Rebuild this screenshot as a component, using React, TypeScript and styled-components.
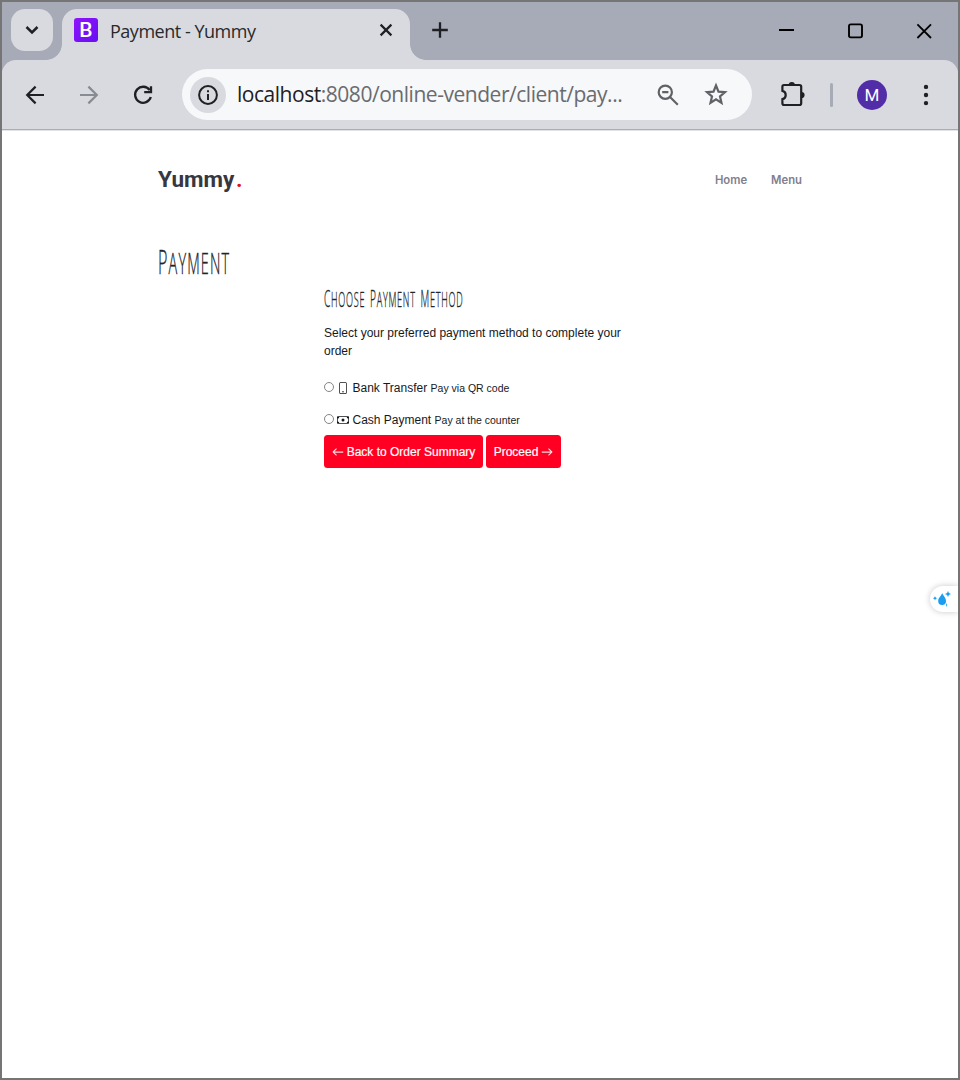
import React from "react";
import styled, { createGlobalStyle } from "styled-components";
import { BsPhone, BsCash, BsArrowLeft, BsArrowRight } from "react-icons/bs";

const GlobalStyle = createGlobalStyle`
  * { box-sizing: border-box; }
  body { margin: 0; background: #fff; }
`;

const Window = styled.div`
  width: 960px;
  height: 1080px;
  border: 2px solid #757575;
  background: #fff;
  display: flex;
  flex-direction: column;
  position: relative;
  overflow: hidden;
  font-family: "Liberation Sans", Arial, sans-serif;
`;

const TitleBar = styled.div`
  height: 58px;
  flex: none;
  background: #a7abb7;
  display: flex;
  align-items: flex-start;
  padding: 7px 0 0 9px;
`;

const TabSearch = styled.button`
  width: 42px;
  height: 42px;
  padding: 0;
  border: 0;
  border-radius: 14px;
  background: #d9dadf;
  display: grid;
  place-items: center;
`;

const Tab = styled.div`
  position: relative;
  width: 348px;
  height: 51px;
  margin-left: 9px;
  padding: 0 16px 0 12px;
  border-radius: 15px 15px 0 0;
  background: #d9dadf;
  display: flex;
  align-items: flex-start;
  &::before,
  &::after {
    content: "";
    position: absolute;
    bottom: 0;
    width: 16px;
    height: 16px;
  }
  &::before {
    right: 100%;
    background: radial-gradient(circle at 0 0, transparent 15.5px, #d9dadf 16.2px);
  }
  &::after {
    left: 100%;
    background: radial-gradient(circle at 100% 0, transparent 15.5px, #d9dadf 16.2px);
  }
`;

const Favicon = styled.span`
  width: 24px;
  height: 24px;
  margin-top: 9px;
  border-radius: 3px;
  background: linear-gradient(135deg, #9013fb, #6610f2);
  color: #fff;
  font: 500 21px/25px Roboto, sans-serif;
  text-align: center;
`;

const TabTitle = styled.span`
  margin: 9px 0 0 12px;
  font: 400 18px/26px "Open Sans", sans-serif;
  letter-spacing: -0.48px;
  color: #28292c;
  flex: 1;
  white-space: nowrap;
`;

const CloseTab = styled.svg`
  margin-top: 13px;
`;

const NewTab = styled.svg`
  margin: 11px 0 0 20px;
`;

const WindowControls = styled.div`
  margin: 12px 24px 0 auto;
  display: flex;
  gap: 49px;
`;

const ToolbarBack = styled.div`
  flex: none;
  background: #a7abb7;
`;

const Toolbar = styled.div`
  height: 70px;
  border-radius: 14px 14px 0 0;
  background: #d9dadf;
  border-bottom: 1px solid #a9abb5;
  box-shadow: 0 1px 0 #e2e3e7;
  display: flex;
  align-items: center;
  padding: 0 20px 0 21px;
  > * {
    flex: none;
  }
`;

const NavIcons = styled.div`
  display: flex;
  gap: 30px;
`;

const AddressBar = styled.div`
  width: 570px;
  height: 51px;
  margin-left: 27px;
  padding: 0 23px 0 8px;
  border-radius: 26px;
  background: #f6f8fa;
  display: flex;
  align-items: center;
`;

const SiteInfo = styled.span`
  width: 36px;
  height: 36px;
  border-radius: 50%;
  background: #d9dadf;
  display: grid;
  place-items: center;
`;

const Url = styled.span`
  flex: 1;
  margin: -1px 0 0 11px;
  font: 400 21px/30px "Open Sans", sans-serif;
  letter-spacing: -0.47px;
  color: #6a6b6e;
  white-space: nowrap;
  b {
    font-weight: 400;
    color: #1f2023;
  }
`;

const AddressIcons = styled.div`
  display: flex;
  gap: 20px;
`;

const ExtensionsIcon = styled.svg`
  margin-left: 27px;
`;

const Divider = styled.span`
  width: 3px;
  height: 24px;
  border-radius: 2px;
  background: #a7abb7;
  margin: 0 24px 0 23px;
`;

const Avatar = styled.span`
  width: 30px;
  height: 30px;
  border-radius: 50%;
  background: #512da8;
  color: #fff;
  font: 400 17px/31px Roboto, sans-serif;
  text-align: center;
  margin-right: 27px;
`;

const Page = styled.div`
  width: 644px;
  margin: 0 auto;
  padding-top: 33px;
  color: #16191c;
  font-size: 12px;
  line-height: 18px;
`;

const SiteHeader = styled.header`
  height: 34px;
  display: flex;
  align-items: center;
  justify-content: space-between;
`;

const Logo = styled.div`
  margin-top: -1px;
  font: 700 22.5px/27px Roboto, sans-serif;
  color: #37373f;
  span {
    color: #e01010;
    margin-left: 1.5px;
  }
`;

const SiteNav = styled.nav`
  display: flex;
  gap: 24px;
  font: 600 11.3px/16px Inter, sans-serif;
  color: #7f7f90;
`;

const Display = styled.div<{ $size: number; $stretch: number; $gap: number }>`
  width: max-content;
  display: flex;
  gap: ${(p) => p.$gap}px;
  font-family: "Open Sans", sans-serif;
  font-weight: 300;
  font-size: ${(p) => p.$size}px;
  line-height: 1;
  letter-spacing: 0.08em;
  text-transform: uppercase;
  transform: scaleX(${(p) => p.$stretch});
  transform-origin: left center;
  -webkit-text-stroke: 0.35px #212529;
  color: #212529;
`;

const Word = styled.span`
  display: inline-block;
  &::first-letter {
    font-size: 1.11em;
  }
`;

const PageHeading = styled.h1`
  margin: 49px 0 0;
  height: 41px;
`;

const PaymentPanel = styled.section`
  width: 322px;
  margin-left: 166px;
`;

const PanelHeading = styled.h2`
  margin: 0;
  height: 37px;
`;

const Intro = styled.p`
  margin: 0 0 19px;
  width: 310px;
`;

const Option = styled.label`
  height: 18px;
  margin-bottom: 14px;
  display: flex;
  align-items: center;
  white-space: pre;
  small {
    font-size: 10.5px;
  }
`;

const Radio = styled.input`
  appearance: none;
  width: 10px;
  height: 10px;
  margin: -2px 3px 0 0;
  border: 1px solid #858585;
  border-radius: 50%;
  background: #fff;
`;

const OptionIcon = styled.span`
  width: 12px;
  height: 12px;
  margin: 0 3.5px 0 0;
  display: grid;
  place-items: center;
`;

const Actions = styled.div`
  margin-top: -8px;
  display: flex;
  gap: 3px;
`;

const Button = styled.button<{ $width: number }>`
  width: ${(p) => p.$width}px;
  height: 33px;
  padding: 0;
  border: 0;
  border-radius: 3.5px;
  background: #ff0022;
  color: #fff;
  font: 12px/18px "Liberation Sans", Arial, sans-serif;
  -webkit-text-stroke: 0.2px #fff;
  display: flex;
  align-items: center;
  justify-content: center;
  gap: 3px;
  white-space: nowrap;
  svg {
    stroke-width: 0.4px;
  }
`;

const SideWidget = styled.div`
  position: absolute;
  right: 0;
  top: 584px;
  width: 28px;
  height: 26px;
  border-radius: 13px 0 0 13px;
  background: #fff;
  box-shadow: 0 0 6px rgba(0, 0, 0, 0.22);
  padding: 3px 0 0 2px;
`;

const Title = ({ text, size, stretch, gap = 0 }: { text: string; size: number; stretch: number; gap?: number }) => (
  <Display $size={size} $stretch={stretch} $gap={gap}>
    {text.split(" ").map((word) => (
      <Word key={word}>{word}</Word>
    ))}
  </Display>
);

export default function App() {
  return (
    <>
      <GlobalStyle />
      <Window>
        <TitleBar>
          <TabSearch aria-label="Search tabs">
            <svg width="14" height="10" viewBox="0 0 14 10" fill="none" stroke="#1f2023" strokeWidth="2.5">
              <path d="M1.5 2 7 7.4 12.5 2" />
            </svg>
          </TabSearch>
          <Tab>
            <Favicon>B</Favicon>
            <TabTitle>Payment - Yummy</TabTitle>
            <CloseTab width="16" height="16" viewBox="0 0 16 16" stroke="#1f2023" strokeWidth="2.2">
              <path d="M2.6 2.6 13.4 13.4M13.4 2.6 2.6 13.4" />
            </CloseTab>
          </Tab>
          <NewTab width="20" height="20" viewBox="0 0 20 20" stroke="#1f2023" strokeWidth="2.3">
            <path d="M10 2.2V17.8M2.2 10H17.8" />
          </NewTab>
          <WindowControls>
            <svg width="20" height="20" viewBox="0 0 20 20">
              <path d="M3 9H18" stroke="#000" strokeWidth="2" />
            </svg>
            <svg width="20" height="20" viewBox="0 0 20 20">
              <rect x="4" y="3.4" width="13" height="13" rx="1.8" fill="none" stroke="#000" strokeWidth="1.9" />
            </svg>
            <svg width="20" height="20" viewBox="0 0 20 20">
              <path d="M3.4 3.4 17 17M17 3.4 3.4 17" stroke="#000" strokeWidth="1.8" />
            </svg>
          </WindowControls>
        </TitleBar>
        <ToolbarBack>
          <Toolbar>
            <NavIcons>
              <svg width="24" height="24" viewBox="0 0 24 24" fill="none" stroke="#1f2023" strokeWidth="2.2">
                <path d="M21 12H4.5M12.6 3.6 4.2 12 12.6 20.4" />
              </svg>
              <svg width="24" height="24" viewBox="0 0 24 24" fill="none" stroke="#898b92" strokeWidth="2.2">
                <path d="M3 12H19.5M11.4 3.6 19.8 12 11.4 20.4" />
              </svg>
              <svg width="24" height="24" viewBox="0 0 24 24" fill="none" stroke="#1f2023" strokeWidth="2.3">
                <path d="M18.7 7.2A8 8 0 1 0 19.8 14" />
                <path d="M20 3.2V9.2H13.2" />
              </svg>
            </NavIcons>
            <AddressBar>
              <SiteInfo>
                <svg width="22" height="22" viewBox="0 0 22 22" fill="none" stroke="#1f2023" strokeWidth="2">
                  <circle cx="11" cy="11" r="8.9" />
                  <path d="M11 10V16M11 6.2V8.2" />
                </svg>
              </SiteInfo>
              <Url>
                <b>localhost</b>:8080/online-vender/client/pay...
              </Url>
              <AddressIcons>
                <svg width="28" height="28" viewBox="0 0 28 28" fill="none" stroke="#606266" strokeWidth="2.2">
                  <circle cx="10.3" cy="11.2" r="6.6" />
                  <path d="M15 16 22.8 23.8M7.2 11.2H13.4" />
                </svg>
                <svg width="26" height="26" viewBox="0 0 26 26" fill="none" stroke="#606266" strokeWidth="2.2">
                  <path d="M13 4.5 15.5 10.6 22 11.1 17 15.4 18.5 21.9 13 18.4 7.5 21.9 9 15.4 4 11.1 10.5 10.6Z" />
                </svg>
              </AddressIcons>
            </AddressBar>
            <ExtensionsIcon width="28" height="28" viewBox="0 0 28 28">
              <path
                d="M5 4H20.5Q22.2 4 22.2 5.7V22.3Q22.2 24 20.5 24H5Q3.4 24 3.4 22.3V18.2C7.8 17.3 7.8 10.7 3.4 9.8V5.7Q3.4 4 5 4Z"
                fill="none"
                stroke="#1f2023"
                strokeWidth="2.2"
              />
              <path d="M9.7 4A3.1 3.1 0 0 1 15.9 4ZM22.5 10.9A3.1 3.1 0 0 1 22.5 17.1Z" fill="#1f2023" />
            </ExtensionsIcon>
            <Divider />
            <Avatar>M</Avatar>
            <svg width="24" height="24" viewBox="0 0 24 24" fill="#1f2023">
              <circle cx="12" cy="3.9" r="2.2" />
              <circle cx="12" cy="12" r="2.2" />
              <circle cx="12" cy="20.1" r="2.2" />
            </svg>
          </Toolbar>
        </ToolbarBack>
        <Page>
          <SiteHeader>
            <Logo>
              Yummy<span>.</span>
            </Logo>
            <SiteNav>
              <span>Home</span>
              <span>Menu</span>
            </SiteNav>
          </SiteHeader>
          <PageHeading>
            <Title text="Payment" size={29.5} stretch={0.49} />
          </PageHeading>
          <PaymentPanel>
            <PanelHeading>
              <Title text="Choose Payment Method" size={21} stretch={0.435} gap={11} />
            </PanelHeading>
            <Intro>Select your preferred payment method to complete your order</Intro>
            <Option>
              <Radio type="radio" name="method" />
              <OptionIcon>
                <BsPhone size={12} />
              </OptionIcon>
              {"Bank Transfer "}
              <small>Pay via QR code</small>
            </Option>
            <Option>
              <Radio type="radio" name="method" />
              <OptionIcon>
                <BsCash size={12} />
              </OptionIcon>
              {"Cash Payment "}
              <small>Pay at the counter</small>
            </Option>
            <Actions>
              <Button $width={159}>
                <BsArrowLeft size={12} />
                Back to Order Summary
              </Button>
              <Button $width={75}>
                Proceed
                <BsArrowRight size={12} />
              </Button>
            </Actions>
          </PaymentPanel>
        </Page>
        <SideWidget>
          <svg width="20" height="20" viewBox="0 0 20 20" fill="#1b9df0">
            <path d="M10.2 4C11 6.5 14 8.5 14 12A3.9 3.9 0 0 1 6.2 12C6.2 8.8 9.3 7 10.2 4Z" />
            <path d="M16 2 16.9 4.1 19 5 16.9 5.9 16 8 15.1 5.9 13 5 15.1 4.1ZM3 7.3 3.7 8.6 5 9.3 3.7 10 3 11.3 2.3 10 1 9.3 2.3 8.6ZM14.7 14 15.3 16 14.7 18 14.1 16Z" />
          </svg>
        </SideWidget>
      </Window>
    </>
  );
}
